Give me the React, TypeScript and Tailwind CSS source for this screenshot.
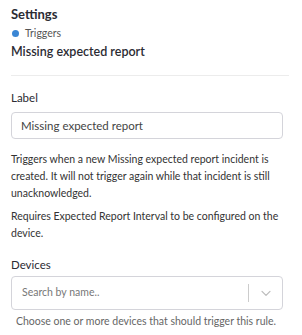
import React from 'react';

const ChevronDown: React.FC<{ className?: string }> = ({ className }) => (
  <svg viewBox="0 0 20 20" className={className} fill="none" stroke="currentColor" strokeWidth={1.5}>
    <path d="M5 8l5 5 5-5" strokeLinecap="round" strokeLinejoin="round" />
  </svg>
);

const App: React.FC = () => {
  return (
    <div className="w-[302px] h-[335px] bg-white px-[11px] pt-[5px] text-[#2b2b33]" style={{ fontFamily: 'Lato, "Open Sans", sans-serif' }}>
      <h1 className="text-[13px] font-bold leading-[18px]">Settings</h1>
      <div className="flex items-center gap-[6px] mt-[3px] ml-[1px]">
        <span className="w-[7px] h-[7px] rounded-full bg-[#3a86d4]" />
        <span className="text-[10.5px] leading-[14px] text-[#555]">Triggers</span>
      </div>
      <h2 className="text-[12.5px] font-semibold leading-[18px] mt-[3px]">Missing expected report</h2>
      <div className="h-px bg-[#ececec] mt-[14px] mr-[2px]" />

      <label className="block text-[11.5px] leading-[14px] mt-[15px]">Label</label>
      <div className="mt-[7px] w-[272px] h-[27px] border border-[#d4d4da] rounded-[4px] flex items-center px-[9px] text-[11.5px] text-[#444]">
        Missing expected report
      </div>

      <p className="text-[10.5px] leading-[17px] text-[#333] mt-[12px]">
        Triggers when a new Missing expected report incident is created. It will not trigger again while that incident is still unacknowledged.
      </p>
      <p className="text-[10.5px] leading-[17px] text-[#333] mt-[6px]">
        Requires Expected Report Interval to be configured on the device.
      </p>

      <label className="block text-[11.5px] leading-[14px] mt-[16px]">Devices</label>
      <div className="mt-[4px] w-[272px] h-[34px] border border-[#d4d4da] rounded-[4px] flex items-center">
        <span className="flex-1 px-[10px] text-[10.5px] text-[#777]">Search by name..</span>
        <span className="w-px h-[18px] bg-[#ccc]" />
        <span className="w-[33px] flex items-center justify-center text-[#bbb]">
          <ChevronDown className="w-[16px] h-[16px]" />
        </span>
      </div>
      <p className="text-[10.5px] leading-[14px] text-[#666] mt-[4px] ml-[5px]">
        Choose one or more devices that should trigger this rule.
      </p>
    </div>
  );
};

export default App;
